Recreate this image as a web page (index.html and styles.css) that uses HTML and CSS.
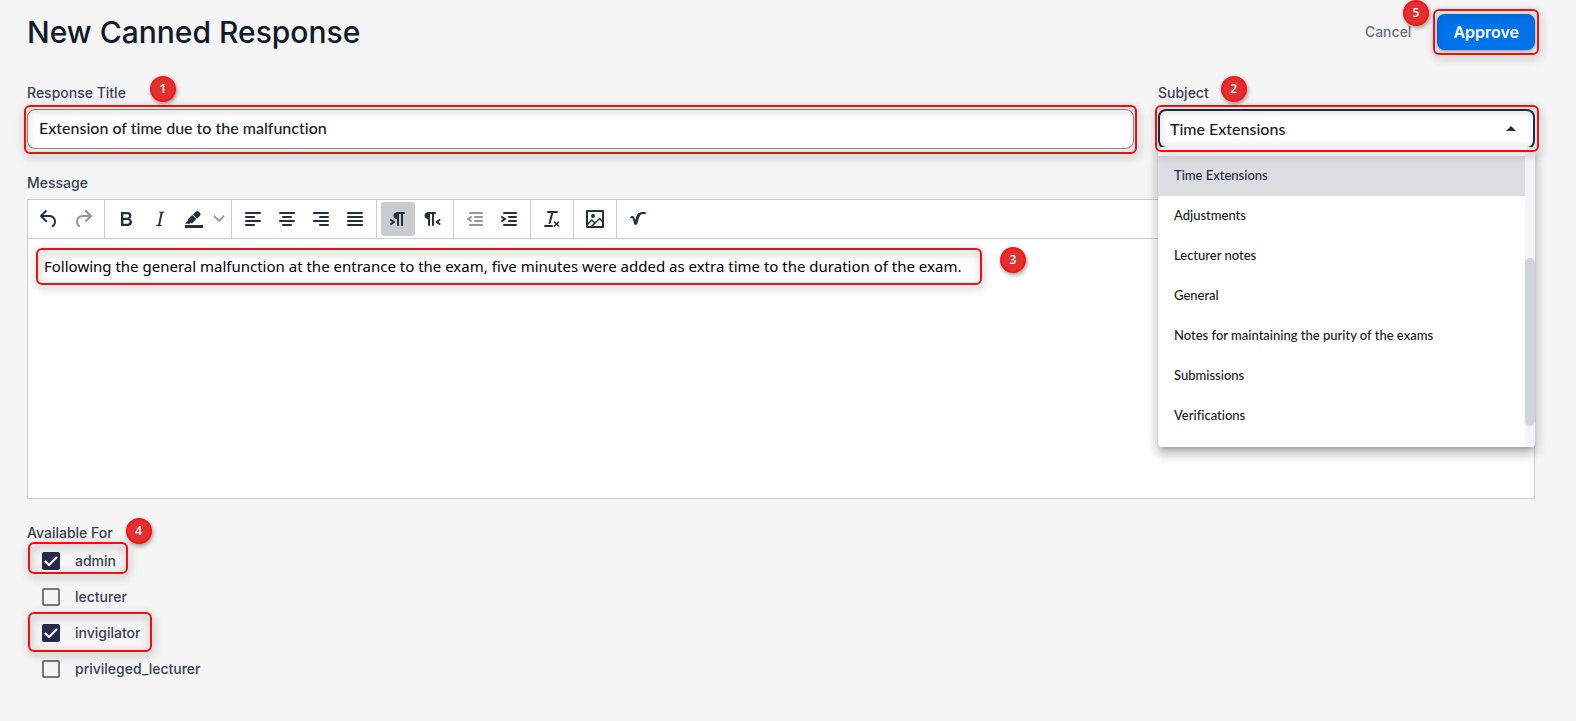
FILE: index.html
```html
<!DOCTYPE html>
<html lang="en">
<head>
<meta charset="utf-8">
<meta name="viewport" content="width=device-width, initial-scale=1">
<title>New Canned Response</title>
<link rel="stylesheet" href="styles.css">
</head>
<body>
<form class="page">
  <header class="header">
    <h1 class="title">New Canned Response</h1>
    <div class="actions">
      <button type="button" class="cancel">Cancel</button>
      <div class="approve-wrap">
        <button type="button" class="approve">Approve</button>
        <span class="frame frame-approve"></span>
        <span class="badge badge-approve">5</span>
      </div>
    </div>
  </header>

  <div class="fields">
    <div class="field">
      <div class="label-row"><label class="label" for="response-title">Response Title</label><span class="badge badge-label">1</span></div>
      <div class="control">
        <input class="input" id="response-title" type="text" value="Extension of time due to the malfunction">
        <span class="frame frame-input"></span>
      </div>
    </div>
    <div class="field">
      <div class="label-row"><label class="label" for="subject">Subject</label><span class="badge badge-subject">2</span></div>
      <div class="control">
        <select class="input select" id="subject"><option>Time Extensions</option></select>
        <svg class="caret" viewBox="0 0 10 5" aria-hidden="true"><path d="M0 5 5 0l5 5z"/></svg>
        <div class="menu">
          <ul class="options" role="listbox" aria-label="Subject">
            <li class="option selected" role="option" aria-selected="true">Time Extensions</li>
            <li class="option" role="option">Adjustments</li>
            <li class="option" role="option">Lecturer notes</li>
            <li class="option" role="option">General</li>
            <li class="option" role="option">Notes for maintaining the purity of the exams</li>
            <li class="option" role="option">Submissions</li>
            <li class="option" role="option">Verifications</li>
          </ul>
          <div class="track"><div class="thumb"></div></div>
        </div>
        <span class="frame frame-select"></span>
      </div>
    </div>
  </div>

  <div class="field message">
    <div class="label-row"><label class="label" for="message">Message</label></div>
    <div class="editor">
      <div class="toolbar" role="toolbar" aria-label="Formatting">
        <div class="group">
          <button type="button" class="tool" aria-label="Undo"><svg class="icon" viewBox="0 0 24 24"><path d="M6.4 8H12c3.7 0 6.2 2 6.8 5.1.6 2.7-.4 5.6-2.3 6.8a1 1 0 0 1-1-1.8c1.1-.6 1.8-2.7 1.4-4.6-.5-2.1-2.1-3.5-4.9-3.5H6.4l3.3 3.3a1 1 0 1 1-1.4 1.4l-5-5a1 1 0 0 1 0-1.4l5-5a1 1 0 0 1 1.4 1.4L6.4 8Z"/></svg></button>
          <button type="button" class="tool" aria-label="Redo" disabled><svg class="icon" viewBox="0 0 24 24"><path d="M17.6 10H12c-2.8 0-4.4 1.4-4.9 3.5-.4 2 .3 4 1.4 4.6a1 1 0 1 1-1 1.8c-2-1.2-2.9-4.1-2.3-6.8.6-3 3-5.1 6.8-5.1h5.6l-3.3-3.3a1 1 0 1 1 1.4-1.4l5 5a1 1 0 0 1 0 1.4l-5 5a1 1 0 0 1-1.4-1.4l3.3-3.3Z"/></svg></button>
        </div>
        <div class="group">
          <button type="button" class="tool" aria-label="Bold"><svg class="icon" viewBox="0 0 24 24"><path d="M7.8 19c-.3 0-.5 0-.6-.2l-.2-.5V5.7c0-.2 0-.4.2-.5l.6-.2h5c1.5 0 2.7.3 3.5 1 .7.6 1.1 1.4 1.1 2.5a3 3 0 0 1-.6 1.9c-.4.6-1 1-1.6 1.2.4.1.9.3 1.3.6s.8.7 1 1.2c.4.4.5 1 .5 1.6 0 1.3-.4 2.3-1.3 3-.8.7-2.1 1-3.8 1H7.8Zm5-8.3c.6 0 1.2-.1 1.6-.5.4-.3.6-.7.6-1.3 0-1.1-.8-1.7-2.3-1.7H9.3v3.5h3.4Zm.5 6c.7 0 1.3-.1 1.7-.4.4-.4.6-.9.6-1.5s-.2-1-.7-1.4c-.4-.3-1-.4-2-.4H9.4v3.8h4Z"/></svg></button>
          <button type="button" class="tool" aria-label="Italic"><svg class="icon" viewBox="0 0 24 24"><path d="m16.7 4.7-.1.9h-.3c-.6 0-1 0-1.4.3-.3.3-.4.6-.5 1.1l-2.1 9.8v.6c0 .5.4.8 1.4.8h.2l-.2.8H8l.2-.8h.2c1.1 0 1.8-.5 2-1.5l2-9.8.1-.5c0-.6-.4-.8-1.4-.8h-.3l.2-.9h5.8Z"/></svg></button>
          <button type="button" class="tool" aria-label="Highlight color"><svg class="icon" viewBox="0 0 24 24"><path d="M3 18h18v3H3z"/><path d="M7.7 16.7H3l3.3-3.3-.7-.8L10.2 8l4 4.1-4 4.2c-.2.2-.6.2-.8 0l-.6-.7-1.1 1.1Zm5-7.5L11 7.4l3-2.9a2 2 0 0 1 2.6 0L18 6c.7.7.7 2 0 2.7l-2.9 2.9-1.8-1.8-.5-.6"/></svg></button>
          <button type="button" class="tool chevron" aria-label="Highlight color menu"><svg class="icon-small" viewBox="0 0 10 10"><path d="M.7 2.2c.3-.3.8-.3 1 0L5 5.4l3.3-3.2c.3-.3.7-.3 1 0 .3.3.3.8 0 1.1L5.5 7.1a.7.7 0 0 1-1 0L.7 3.3a.8.8 0 0 1 0-1.1Z"/></svg></button>
        </div>
        <div class="group">
          <button type="button" class="tool" aria-label="Align left"><svg class="icon" viewBox="0 0 24 24"><path d="M5 5h14a1 1 0 0 1 0 2H5a1 1 0 0 1 0-2Zm0 4h8a1 1 0 0 1 0 2H5a1 1 0 0 1 0-2Zm0 4h14a1 1 0 0 1 0 2H5a1 1 0 0 1 0-2Zm0 4h8a1 1 0 0 1 0 2H5a1 1 0 0 1 0-2Z"/></svg></button>
          <button type="button" class="tool" aria-label="Align center"><svg class="icon" viewBox="0 0 24 24"><path d="M5 5h14a1 1 0 0 1 0 2H5a1 1 0 0 1 0-2Zm3 4h8a1 1 0 0 1 0 2H8a1 1 0 0 1 0-2Zm-3 4h14a1 1 0 0 1 0 2H5a1 1 0 0 1 0-2Zm3 4h8a1 1 0 0 1 0 2H8a1 1 0 0 1 0-2Z"/></svg></button>
          <button type="button" class="tool" aria-label="Align right"><svg class="icon" viewBox="0 0 24 24"><path d="M5 5h14a1 1 0 0 1 0 2H5a1 1 0 0 1 0-2Zm6 4h8a1 1 0 0 1 0 2h-8a1 1 0 0 1 0-2Zm-6 4h14a1 1 0 0 1 0 2H5a1 1 0 0 1 0-2Zm6 4h8a1 1 0 0 1 0 2h-8a1 1 0 0 1 0-2Z"/></svg></button>
          <button type="button" class="tool" aria-label="Justify"><svg class="icon" viewBox="0 0 24 24"><path d="M5 5h14a1 1 0 0 1 0 2H5a1 1 0 0 1 0-2Zm0 4h14a1 1 0 0 1 0 2H5a1 1 0 0 1 0-2Zm0 4h14a1 1 0 0 1 0 2H5a1 1 0 0 1 0-2Zm0 4h14a1 1 0 0 1 0 2H5a1 1 0 0 1 0-2Z"/></svg></button>
        </div>
        <div class="group">
          <button type="button" class="tool active" aria-label="Left to right" aria-pressed="true"><svg class="icon" viewBox="0 0 24 24"><path d="M11 5h7a1 1 0 0 1 0 2h-1v11a1 1 0 0 1-2 0V7h-2v11a1 1 0 0 1-2 0v-6c-.5 0-1 0-1.4-.3A3.4 3.4 0 0 1 7.8 10a3.3 3.3 0 0 1 0-2.8 3.4 3.4 0 0 1 1.8-1.8L11 5ZM4.4 16.2 6.2 15l-1.8-1.2a1 1 0 0 1 1.2-1.6l3 2a1 1 0 0 1 0 1.6l-3 2a1 1 0 1 1-1.2-1.6Z"/></svg></button>
          <button type="button" class="tool" aria-label="Right to left"><svg class="icon" viewBox="0 0 24 24"><path d="M8 5h7a1 1 0 0 1 0 2h-1v11a1 1 0 0 1-2 0V7h-2v11a1 1 0 0 1-2 0v-6c-.5 0-1 0-1.4-.3A3.4 3.4 0 0 1 4.8 10a3.3 3.3 0 0 1 0-2.8 3.4 3.4 0 0 1 1.8-1.8L8 5Zm12.200 11.200a1 1 0 1 1-1.200 1.600l-3-2a1 1 0 0 1 0-1.600l3-2a1 1 0 1 1 1.200 1.600L18.400 15l1.800 1.200Z"/></svg></button>
        </div>
        <div class="group">
          <button type="button" class="tool" aria-label="Decrease indent" disabled><svg class="icon" viewBox="0 0 24 24"><path d="M7 5h12a1 1 0 0 1 0 2H7a1 1 0 1 1 0-2Zm5 4h7a1 1 0 0 1 0 2h-7a1 1 0 0 1 0-2Zm0 4h7a1 1 0 0 1 0 2h-7a1 1 0 0 1 0-2Zm-5 4h12a1 1 0 0 1 0 2H7a1 1 0 0 1 0-2Zm1.600-3.800a1 1 0 0 1-1.200 1.600l-3-2a1 1 0 0 1 0-1.600l3-2a1 1 0 0 1 1.200 1.600L6.800 12l1.800 1.200Z"/></svg></button>
          <button type="button" class="tool" aria-label="Increase indent"><svg class="icon" viewBox="0 0 24 24"><path d="M7 5h12a1 1 0 0 1 0 2H7a1 1 0 1 1 0-2Zm5 4h7a1 1 0 0 1 0 2h-7a1 1 0 0 1 0-2Zm0 4h7a1 1 0 0 1 0 2h-7a1 1 0 0 1 0-2Zm-5 4h12a1 1 0 0 1 0 2H7a1 1 0 0 1 0-2Zm-2.600-3.800L6.200 12l-1.800-1.200a1 1 0 0 1 1.200-1.600l3 2a1 1 0 0 1 0 1.600l-3 2a1 1 0 1 1-1.200-1.600Z"/></svg></button>
        </div>
        <div class="group">
          <button type="button" class="tool" aria-label="Clear formatting"><svg class="icon" viewBox="0 0 24 24"><path d="M13.2 6a1 1 0 0 1 0 .2l-2.600 10a1 1 0 0 1-1 .8h-.2a.8.8 0 0 1-.8-1l2.600-10H8a1 1 0 1 1 0-2h9a1 1 0 0 1 0 2h-3.800ZM5 18h7a1 1 0 0 1 0 2H5a1 1 0 0 1 0-2Zm13 1.500L16.500 18 15 19.500a.7.7 0 0 1-1-1l1.500-1.500-1.500-1.500a.7.7 0 0 1 1-1l1.500 1.500 1.500-1.500a.7.7 0 0 1 1 1L17.500 17l1.500 1.500a.7.7 0 0 1-1 1Z"/></svg></button>
        </div>
        <div class="group">
          <button type="button" class="tool" aria-label="Insert image"><svg class="icon" viewBox="0 0 24 24"><path fill-rule="evenodd" d="m5 15.700 3.300-3.200c.3-.3.7-.3 1 0L12 15l4.100-4c.3-.4.8-.4 1 0l2 1.900V5H5v10.700ZM5 18v1h3l2.800-2.900-2-2L5 17.900Zm14-3-2.500-2.400-6.400 6.500H19v-4ZM4 3h16c.6 0 1 .4 1 1v16c0 .6-.4 1-1 1H4a1 1 0 0 1-1-1V4c0-.6.4-1 1-1Zm6 8a2 2 0 1 0 0-4 2 2 0 0 0 0 4Z"/></svg></button>
        </div>
        <div class="group last">
          <button type="button" class="tool" aria-label="Insert formula"><svg class="icon" viewBox="0 0 24 24"><path d="M4 10.400C4.800 9.300 6.600 8.600 7.600 9.500c.8.800 1.200 2.200 1.600 3.900C10 9.800 11.200 7 12.400 6.100c1.400-1.100 4.600-1.300 6.600-1.200 1.200.1 1.200 2 0 2.200-1.900.2-4 .1-4.800 1.100-1.300 1.900-1.900 5.300-2.900 8.600-.4 1.400-2.700 1.500-3.200.1-.7-2.300-1-4.600-1.900-5.900-.7.200-1.600.7-2.200-.6Z"/></svg></button>
        </div>
      </div>
      <div class="body">
        <textarea class="textarea" id="message">Following the general malfunction at the entrance to the exam, five minutes were added as extra time to the duration of the exam.</textarea>
        <span class="frame frame-message"></span>
        <span class="badge badge-message">3</span>
      </div>
    </div>
  </div>

  <fieldset class="roles">
    <legend class="label-row"><span class="label">Available For</span><span class="badge badge-roles">4</span></legend>
    <div class="role">
      <label class="check"><span class="box"><input type="checkbox" checked><svg class="tick" viewBox="0 0 18 18" aria-hidden="true"><path d="m3 9 4 4 8-8"/></svg></span>admin</label>
      <span class="frame frame-admin"></span>
    </div>
    <div class="role"><label class="check"><span class="box"><input type="checkbox"></span>lecturer</label></div>
    <div class="role">
      <label class="check"><span class="box"><input type="checkbox" checked><svg class="tick" viewBox="0 0 18 18" aria-hidden="true"><path d="m3 9 4 4 8-8"/></svg></span>invigilator</label>
      <span class="frame frame-invigilator"></span>
    </div>
    <div class="role"><label class="check"><span class="box"><input type="checkbox"></span>privileged_lecturer</label></div>
  </fieldset>
</form>
</body>
</html>
```

FILE: styles.css
```css
* { box-sizing: border-box; }

body {
  margin: 0;
  background: #f5f5f5;
  color: #374151;
  font: 500 14px/20px Inter, sans-serif;
}

button, input, select, textarea { margin: 0; font: inherit; color: inherit; }
button { border: 0; padding: 0; background: none; cursor: pointer; }

.page { padding: 14px 41px 34px 27px; }

.header {
  display: flex;
  align-items: center;
  justify-content: space-between;
  margin-bottom: 33px;
}
.title { margin: 0; color: #111827; font-size: 30px; line-height: 36px; font-weight: 500; }
.actions { display: flex; align-items: center; gap: 26px; }
.cancel { color: #6b7280; }
.approve-wrap { position: relative; }
.approve {
  display: block;
  height: 36px;
  padding: 0 16px;
  border-radius: 8px;
  background: #0073ea;
  color: #fff;
  font-size: 16px;
  font-weight: 600;
  box-shadow: 0 1px 3px rgba(0, 0, 0, .4);
}

.fields { display: grid; grid-template-columns: minmax(0, 1fr) 25%; gap: 24px; }
.label-row { position: relative; display: flex; width: fit-content; margin: 0 0 6px; padding: 0; }
.control { position: relative; }

.input {
  display: block;
  width: 100%;
  height: 40px;
  padding: 0 11px 3px;
  border: 1px solid #8c8c8c;
  border-radius: 8px;
  outline: 0;
  background: #fff;
  color: #1a1a1a;
  font: 500 16px Lato, sans-serif;
  font-variant-ligatures: none;
}
.select { appearance: none; padding: 0 10px 2px; border: 2px solid #252b48; }
.caret { position: absolute; right: 19px; top: 17px; width: 10px; height: 5px; fill: #252b48; }

.menu {
  position: absolute;
  z-index: 2;
  top: 38px;
  left: 0;
  right: 0;
  display: flex;
  height: 300px;
  border-radius: 4px;
  background: #fff;
  box-shadow: 0 5px 5px -3px rgba(0, 0, 0, .2), 0 8px 10px 1px rgba(0, 0, 0, .14), 0 3px 14px 2px rgba(0, 0, 0, .12);
}
.options {
  flex: 1;
  margin: 0;
  padding: 9px 0 0;
  list-style: none;
  color: #1a1a1a;
  font: 500 13px/38px Lato, sans-serif;
  font-variant-ligatures: none;
}
.option { height: 40px; padding: 0 16px; }
.option.selected { background: #dcdde1; color: #252b48; }
.track { width: 10px; padding-top: 111px; border-radius: 5px; background: #f3f4f8; }
.thumb { height: 168px; border-radius: 5px; background: #d0d4dd; }

.message { margin-top: 24px; }
.editor { border: 1px solid #ccc; background: #fff; }
.toolbar { display: flex; border-bottom: 1px solid #ccc; }
.group { display: flex; padding: 2px 4px; border-right: 1px solid #ccc; }
.group.last { border-right: 0; }
.tool { display: grid; place-items: center; width: 34px; height: 34px; border-radius: 3px; }
.tool.active { background: #c8cbcf; }
.tool:disabled { opacity: .5; }
.tool.chevron { width: 16px; opacity: .5; }
.icon { width: 24px; height: 24px; fill: #222f3e; }
.icon-small { width: 12px; height: 12px; fill: #222f3e; }
.body { position: relative; }
.textarea {
  display: block;
  width: 100%;
  height: 259px;
  padding: 16px;
  border: 0;
  outline: 0;
  resize: none;
  background: none;
  color: #000;
  font: 15px/22px "Noto Sans", sans-serif;
}

.roles { margin: 24px 0 0; padding: 0; border: 0; }
.roles .label-row { margin: 0; }
.role { position: relative; }
.check { display: flex; align-items: center; gap: 15px; width: fit-content; height: 36px; padding-left: 15px; }
.box { display: grid; }
.box input, .tick { grid-area: 1 / 1; width: 18px; height: 18px; }
.box input { appearance: none; border: 2px solid #757575; border-radius: 2px; }
.box input:checked { border-color: #252b48; background: #252b48; }
.tick { pointer-events: none; fill: none; stroke: #fff; stroke-width: 2; }

/* Step callouts drawn over the controls */
.frame {
  position: absolute;
  z-index: 3;
  border: 2px solid #f00f0f;
  border-radius: 6px;
  filter: drop-shadow(1px 3px 4px rgba(0, 0, 0, .45));
  pointer-events: none;
}
.badge {
  position: absolute;
  z-index: 4;
  width: 26px;
  height: 26px;
  border: 2px solid #fa1414;
  border-radius: 50%;
  background: #e03030;
  box-shadow: 1px 2px 4px rgba(0, 0, 0, .4);
  color: #fff;
  font: 600 12px/22px "Open Sans", sans-serif;
  text-align: center;
}
.frame-approve { inset: -5px -4px; }
.frame-input { inset: -4px -3px -5px; }
.frame-select { inset: -4px -4px -3px -3px; }
.frame-message { top: 9px; left: 8px; width: 946px; height: 37px; }
.frame-admin { top: -1px; left: 1px; width: 100px; height: 32px; }
.frame-invigilator { top: -3px; left: 1px; width: 124px; height: 40px; }
.badge-approve { top: -14px; right: 106px; }
.badge-label { top: -7px; left: calc(100% + 24px); }
.badge-subject { top: -7px; left: calc(100% + 12px); }
.badge-roles { top: -5px; left: calc(100% + 13px); }
.badge-message { top: 8px; left: 972px; }
```
